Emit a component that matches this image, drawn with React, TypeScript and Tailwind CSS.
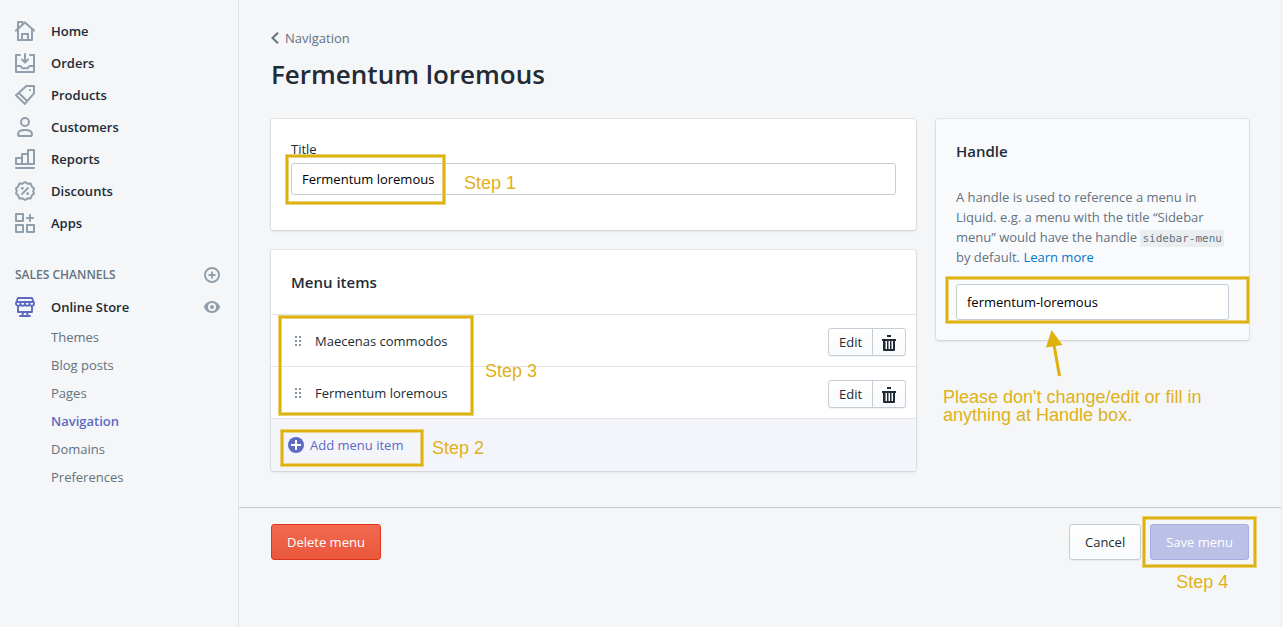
import { useState, type ReactNode } from 'react'

function Icon({ children, className = 'size-5' }: { children: ReactNode; className?: string }) {
  return (
    <svg
      viewBox="0 0 20 20"
      fill="none"
      stroke="currentColor"
      strokeWidth="2"
      strokeLinejoin="round"
      strokeLinecap="round"
      aria-hidden="true"
      className={`shrink-0 ${className}`}
    >
      {children}
    </svg>
  )
}

const mainLinks: { label: string; icon: ReactNode }[] = [
  {
    label: 'Home',
    icon: <path d="M1 9.600 10 1.400l9 8.200M3 8.200V19h14V8.200M3 8V1h4.500v2.500M7 19v-6h6v6" />,
  },
  {
    label: 'Orders',
    icon: <path d="M5 2H1v17h18V2h-4M1 13h4.600l1.600 2.200h5.600l1.600-2.200H19M10 1v8M7 6.600l3 2.800 3-2.800" />,
  },
  {
    label: 'Products',
    icon: (
      <>
        <path d="M11.400 1H19v7.400L9.800 18.900 1 10.200zM4 8l8.200 8.200" />
        <circle cx="14.900" cy="5" r="1.100" fill="currentColor" stroke="none" />
      </>
    ),
  },
  {
    label: 'Customers',
    icon: (
      <>
        <circle cx="10" cy="5" r="4" />
        <path d="M3 17.200c0-2.600 3-4.200 7-4.200s7 1.600 7 4.200c0 1.200-.6 1.800-1.800 1.800H4.800C3.600 19 3 18.400 3 17.200z" />
      </>
    ),
  },
  {
    label: 'Reports',
    icon: <path d="M1 19h18M1 15h18V1h-6v14M1 15V9h6v6M7 9V5h6" />,
  },
  {
    label: 'Discounts',
    icon: (
      <>
        <path d="M10 1l2.600 1.700 3.100-.1 1.100 2.900 2.200 2-.8 2.500.8 2.500-2.200 2-1.100 2.900-3.100-.1L10 19l-2.600-1.700-3.100.1-1.100-2.900-2.200-2 .8-2.500L1 7.500l2.200-2 1.100-2.900 3.100.1z" />
        <path d="m7 13 6-6" strokeWidth="1.800" />
        <circle cx="7.300" cy="7.300" r="1.400" fill="currentColor" stroke="none" />
        <circle cx="12.700" cy="12.700" r="1.400" fill="currentColor" stroke="none" />
      </>
    ),
  },
  {
    label: 'Apps',
    icon: <path d="M1 1h7v7H1zM1 12h7v7H1zM12 12h7v7h-7zM15 2v6M12 5h6" />,
  },
]

const storeLinks = ['Themes', 'Blog posts', 'Pages', 'Navigation', 'Domains', 'Preferences']

function Sidebar() {
  return (
    <nav className="w-[239px] shrink-0 border-r border-[#dfe3e8] pt-[15px] pl-[15px] pr-[18px]">
      <ul>
        {mainLinks.map(({ label, icon }) => (
          <li key={label}>
            <a href="#" className="flex h-8 items-center gap-4 font-semibold text-[#212b36]">
              <span className="text-[#919eab]">
                <Icon>{icon}</Icon>
              </span>
              {label}
            </a>
          </li>
        ))}
      </ul>
      <div className="mt-5 flex h-8 items-center justify-between text-[#637381]">
        <h2 className="text-xs leading-5 font-semibold uppercase">Sales channels</h2>
        <button type="button" aria-label="Add sales channel" className="text-[#919eab]">
          <Icon className="size-4">
            <circle cx="10" cy="10" r="8.800" strokeWidth="2.300" />
            <path d="M10 6.500v7M6.500 10h7" strokeWidth="2.300" />
          </Icon>
        </button>
      </div>
      <div className="flex h-8 items-center justify-between">
        <a href="#" className="flex items-center gap-4 font-semibold text-[#212b36]">
          <span className="text-[#5c6ac4]">
            <Icon>
              <path
                strokeWidth="1.900"
                d="M3 1h14l2 5v.6a2.200 2.200 0 0 1-4.500 0 2.200 2.200 0 0 1-4.500 0 2.200 2.200 0 0 1-4.500 0A2.200 2.200 0 0 1 1 6.600V6zM1.500 5h17M3 9v6h14V9M8 15.500 7.500 18M12 15.500l.5 2.500M5 19h10"
              />
            </Icon>
          </span>
          Online Store
        </a>
        <button type="button" aria-label="View your online store" className="text-[#919eab]">
          <svg viewBox="0 0 16 16" fill="currentColor" aria-hidden="true" className="size-4">
            <path
              fillRule="evenodd"
              d="M8 2C3.500 2 .8 5.600.1 7.500a1.500 1.500 0 0 0 0 1C.8 10.400 3.500 14 8 14s7.200-3.600 7.900-5.500a1.500 1.500 0 0 0 0-1C15.200 5.600 12.500 2 8 2zm0 10a4 4 0 1 1 0-8 4 4 0 0 1 0 8z"
            />
            <circle cx="8" cy="8" r="2" />
          </svg>
        </button>
      </div>
      <ul className="pl-9">
        {storeLinks.map((label) => (
          <li key={label}>
            <a
              href="#"
              aria-current={label === 'Navigation' ? 'page' : undefined}
              className={
                label === 'Navigation'
                  ? 'flex h-7 items-center font-semibold text-[#5c6ac4]'
                  : 'flex h-7 items-center text-[#637381]'
              }
            >
              {label}
            </a>
          </li>
        ))}
      </ul>
    </nav>
  )
}

/* Golden outline drawn around the part that a step refers to. */
function Highlight({ className }: { className: string }) {
  return (
    <span
      aria-hidden="true"
      className={`pointer-events-none absolute border-4 border-double border-[#e8d27c] ${className}`}
    >
      <span className="absolute -inset-[3px] border-2 border-[#dfb10b]" />
    </span>
  )
}

function Step({ children, className }: { children: ReactNode; className: string }) {
  return (
    <span
      className={`pointer-events-none absolute font-['Liberation_Sans',Arial,sans-serif] text-lg leading-[18px] text-[#dfb11b] ${className}`}
    >
      {children}
    </span>
  )
}

function MenuItem({ label }: { label: string }) {
  return (
    <li className="flex h-[52px] items-center border-t border-[#dfe3e8] pl-6 pr-2.5">
      <svg viewBox="0 0 6 10" fill="#84919e" aria-hidden="true" className="h-2.5 w-1.5 shrink-0">
        <path d="M0 0h2v2H0zM4 0h2v2H4zM0 4h2v2H0zM4 4h2v2H4zM0 8h2v2H0zM4 8h2v2H4z" />
      </svg>
      <span className="flex-1 pl-3.5">{label}</span>
      <div className="mt-0.5 flex h-7 rounded-[3px] border border-[#c4cdd5] bg-linear-to-b from-white to-[#f9fafb] shadow-[0_1px_0_rgba(22,29,37,0.05)]">
        <button type="button" className="w-11 border-r border-[#c4cdd5]">
          Edit
        </button>
        <button type="button" aria-label={`Delete ${label}`} className="flex w-8 items-center justify-center">
          <svg viewBox="0 0 14 16" fill="#212b36" aria-hidden="true" className="mt-0.5 h-4 w-3.5">
            <path
              fillRule="evenodd"
              d="M5 0h4v2H5zM0 4h14v2h-1v9a1 1 0 0 1-1 1H2a1 1 0 0 1-1-1V6H0zm3.500 2v8h1.500V6zm3 0v8h1.500V6zm3 0v8H11V6z"
            />
          </svg>
        </button>
      </div>
    </li>
  )
}

const card = 'rounded-[3px] shadow-[0_0_0_1px_rgba(63,63,68,0.08),0_1px_3px_0_rgba(63,63,68,0.15)]'
const field = 'block w-full rounded-[3px] border border-[#c4cdd5] bg-white px-2.5 text-black outline-none'

export default function App() {
  const [title, setTitle] = useState('Fermentum loremous')
  const [handle, setHandle] = useState('fermentum-loremous')

  return (
    <div className="flex min-h-screen bg-[#f4f6f8] font-['Open_Sans','Segoe_UI',sans-serif] text-[13px] leading-5 text-[#212b36]">
      <Sidebar />
      <main className="mr-0.5 min-w-0 flex-1 shadow-[1px_0_0_#ebeef0]">
        <header className="px-8 pt-7">
          <a href="#" className="flex h-5 items-center gap-1.5 text-[#637381]">
            <svg viewBox="0 0 8 12" fill="none" stroke="currentColor" strokeWidth="2" aria-hidden="true" className="h-3 w-2">
              <path d="M7 .7 1.500 6 7 11.300" />
            </svg>
            Navigation
          </a>
          <h1 className="mt-1.5 text-[26px] leading-10 font-semibold">{title}</h1>
        </header>

        <div className="grid grid-cols-[minmax(0,1fr)_313px] items-start gap-5 px-8 pt-[25px]">
          <div className="flex flex-col gap-5">
            <section className={`bg-white px-5 pt-5 pb-[35px] ${card}`}>
              <label htmlFor="menu-title" className="block h-6">
                Title
              </label>
              <div className="relative">
                <input
                  id="menu-title"
                  value={title}
                  onChange={(event) => setTitle(event.target.value)}
                  className={`h-8 ${field}`}
                />
                <Highlight className="-top-[9px] -left-1.5 h-[51px] w-[161px]" />
                <Step className="top-[11px] left-[173px]">Step 1</Step>
              </div>
            </section>

            <section className={`overflow-hidden bg-white ${card}`}>
              <h2 className="flex h-16 items-center px-5 text-[15px] font-semibold">Menu items</h2>
              <div className="relative">
                <ul>
                  <MenuItem label="Maecenas commodos" />
                  <MenuItem label="Fermentum loremous" />
                </ul>
                <Highlight className="top-px left-[7px] h-[101px] w-[196px]" />
                <Step className="top-12 left-[214px]">Step 3</Step>
              </div>
              <div className="relative flex h-[53px] items-center border-t border-[#dfe3e8] bg-[#f4f5fa] px-[17px]">
                <button type="button" className="flex items-center gap-1.5 text-[#5c6ac4]">
                  <svg viewBox="0 0 16 16" aria-hidden="true" className="size-4">
                    <circle cx="8" cy="8" r="8" fill="currentColor" />
                    <path d="M8 3v10M3 8h10" stroke="#fff" strokeWidth="2" />
                  </svg>
                  Add menu item
                </button>
                <Highlight className="top-2.5 left-[9px] h-[38px] w-36" />
                <Step className="top-5 left-[161px]">Step 2</Step>
              </div>
            </section>
          </div>

          <aside className={`relative bg-[#f9fafc] p-5 ${card}`}>
            <h2 className="-mt-1 h-[52px] text-[15px] leading-8 font-semibold">Handle</h2>
            <p className="text-[#637381]">
              A handle is used to reference a menu in Liquid. e.g. a menu with the title “Sidebar menu” would have the
              handle{' '}
              <code className="bg-[#ebeef0] px-0.5 py-0.5 font-['DejaVu_Sans_Mono',monospace] text-[11px] leading-4 whitespace-nowrap">
                sidebar-menu
              </code>{' '}
              by default.{' '}
              <a href="#" className="text-[#007ace]">
                Learn more
              </a>
            </p>
            <div className="relative mt-[17px]">
              <input
                aria-label="Handle"
                value={handle}
                onChange={(event) => setHandle(event.target.value)}
                className={`h-9 ${field}`}
              />
              <Highlight className="-top-2 -right-[21px] -bottom-1 -left-[11px]" />
            </div>
            <svg viewBox="0 0 18 48" aria-hidden="true" className="absolute top-[211px] left-[110px] h-12 w-[18px]">
              <path d="m8 15 5.500 31" stroke="#dfb10b" strokeWidth="3" fill="none" />
              <path d="M5.500 0 16.500 15 0 17.500z" fill="#dfb10b" />
            </svg>
            <Step className="top-[269px] left-[7px] w-72">Please don't change/edit or fill in anything at Handle box.</Step>
          </aside>
        </div>

        <footer className="mt-9 flex items-center gap-[9px] border-t border-[#c4cdd5] px-8 py-4">
          <button
            type="button"
            className="h-9 rounded-[3px] border border-[#de3618] bg-linear-to-b from-[#f2694f] to-[#e9573c] px-[15px] text-white"
          >
            Delete menu
          </button>
          <button
            type="button"
            className="ml-auto h-9 rounded-[3px] border border-[#c4cdd5] bg-linear-to-b from-white to-[#f9fafb] px-[15px] shadow-[0_1px_0_rgba(22,29,37,0.05)]"
          >
            Cancel
          </button>
          <div className="relative">
            <button
              type="button"
              disabled
              className="h-9 rounded-[3px] border border-[#a7aee0] bg-[#bac0e6] px-[15px] text-white"
            >
              Save menu
            </button>
            <Highlight className="-inset-2" />
            <Step className="top-[49px] left-[26px] whitespace-nowrap">Step 4</Step>
          </div>
        </footer>
      </main>
    </div>
  )
}
